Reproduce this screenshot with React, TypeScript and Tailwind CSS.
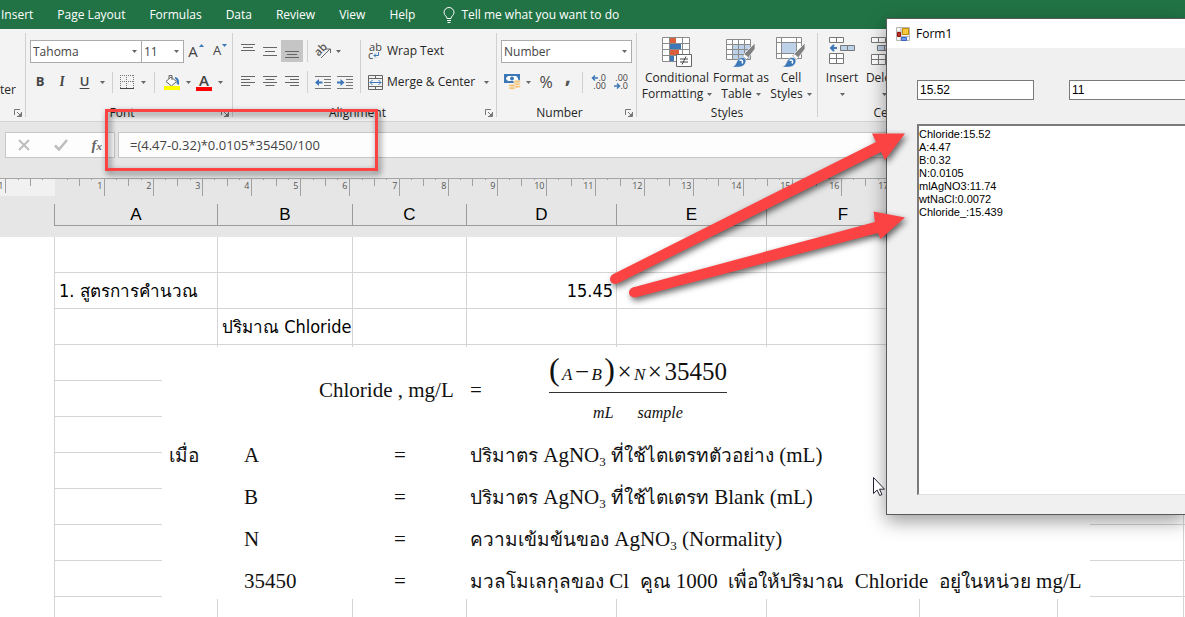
import React from "react";
import clsx from "clsx";

const tabs = ["Insert", "Page Layout", "Formulas", "Data", "Review", "View", "Help"];

const columns = [
	{ id: "A", width: "w-[163px]" },
	{ id: "B", width: "w-[135px]" },
	{ id: "C", width: "w-[114px]" },
	{ id: "D", width: "w-[150px]" },
	{ id: "E", width: "w-[150px]" },
	{ id: "F", width: "w-[153px]" },
	{ id: "G", width: "w-[138px]" },
	{ id: "H", width: "w-[126px]" },
	{ id: "I", width: "" },
];

const cells: { [key: string]: React.ReactNode } = {
	A2: <>1. <span className="text-[17px]">สูตรการคำนวณ</span></>,
	D2: "15.45",
	B3: <><span className="text-[17px]">ปริมาณ</span> Chloride</>,
};

const rows = [1, 2, 3, 4, 5, 6, 7, 8, 9, 10, 11];

const log = ["Chloride:15.52", "A:4.47", "B:0.32", "N:0.0105", "mlAgNO3:11.74", "wtNaCl:0.0072", "Chloride_:15.439"].join("\n");

const Caret = () => (
	<svg viewBox="0 0 5 3" className="w-[5px] h-[3px] shrink-0" fill="#666666" aria-hidden="true">
		<path d="M0 0h5L2.5 3z" />
	</svg>
);

const CaretButton = ({ label, className }: { label: string; className: string }) => (
	<button type="button" aria-label={label} className={clsx("h-[22px] flex items-center justify-center", className)}>
		<Caret />
	</button>
);

const Tool = ({ label, className, children }: { label: string; className: string; children: React.ReactNode }) => (
	<button type="button" aria-label={label} className={clsx("h-[22px] flex items-center justify-center shrink-0", className)}>
		{children}
	</button>
);

const Divider = ({ className }: { className: string }) => <div className={clsx("w-px bg-[#d0d0d0] shrink-0", className)} />;

const Launcher = ({ label }: { label: string }) => (
	<button type="button" aria-label={label} className="w-2 h-2 ml-[3px] mr-[3px] shrink-0">
		<svg viewBox="0 0 8 8" className="w-2 h-2" fill="none" stroke="#777777">
			<path d="M.5 6V.5H6M3 3l3 3M7.5 3v4.5H3" />
			<path d="M7 4v3H4z" fill="#777777" stroke="none" />
		</svg>
	</button>
);

const Group = ({ label, launcher, className, children }: { label: string; launcher?: boolean; className: string; children: React.ReactNode }) => (
	<section aria-label={label || "Clipboard"} className={clsx("flex flex-col shrink-0 h-[84px] border-r border-[#d0d0d0]", className)}>
		{children}
		<div className="mt-auto flex items-center h-2 leading-4">
			<div className="flex-1 text-center">{label}</div>
			{launcher && <Launcher label={`${label} settings`} />}
		</div>
	</section>
);

const Combo = ({ label, value, className }: { label: string; value: string; className: string }) => (
	<div className={clsx("grid items-center border border-[#ababab] bg-white h-[23px]", className)}>
		<select aria-label={label} className="col-start-1 row-start-1 appearance-none w-full bg-transparent pl-[2px] leading-5 text-[#444444] outline-none">
			<option>{value}</option>
		</select>
		<div className="col-start-1 row-start-1 justify-self-end pr-1 pointer-events-none">
			<Caret />
		</div>
	</div>
);

const Lines = ({ d, size = 14 }: { d: string; size?: number }) => (
	<svg viewBox={`0 0 ${size} 14`} width={size} height="14" stroke="#666666" fill="none" aria-hidden="true">
		<path d={d} />
	</svg>
);

const IndentIcon = ({ right }: { right?: boolean }) => (
	<svg viewBox="0 0 16 14" width="16" height="14" fill="none" aria-hidden="true">
		<path d="M0 1.5h16M9 4.5h7M9 7.5h7M9 10.5h7M0 13.5h16" stroke="#777777" />
		{right ? (
			<path d="M0 6.5h3.500V4l4 3.500-4 3.500V8.500H0z" fill="#3c78b8" />
		) : (
			<path d="M7.500 6.500H4V4L0 7.500 4 11V8.500h3.500z" fill="#3c78b8" />
		)}
	</svg>
);

const BordersIcon = () => (
	<svg viewBox="0 0 14 14" width="14" height="14" fill="none" stroke="#777777" aria-hidden="true">
		<path d="M0 .5h14M0 6.500h14M.5 0v13M6.500 0v13M13.500 0v13" strokeDasharray="1 1" />
		<path d="M0 13.500h14" stroke="#444444" />
	</svg>
);

const FillIcon = () => (
	<svg viewBox="0 0 16 16" width="16" height="16" fill="none" aria-hidden="true">
		<path d="M11 3c3 .5 4.500 2.500 4 8l-2.500-1.500c.5-2 .5-3.500-1.500-5z" fill="#3c78b8" />
		<path d="M7 3l5.500 4.500-5 4.500L2 7.500z" fill="#ffffff" stroke="#666666" />
		<path d="M5 5V1.500h3V6" stroke="#666666" />
		<path d="M0 12h16v4H0z" fill="#ffff00" />
	</svg>
);

const OrientationIcon = () => (
	<svg viewBox="0 0 17 16" width="17" height="16" fill="none" className="overflow-visible" aria-hidden="true">
		<text x="0" y="11" transform="rotate(-45 5 8)" fontSize="11" fontWeight="600" fill="#555555">ab</text>
		<path d="M6 15L15 6M11 6h4.500v4" stroke="#666666" />
	</svg>
);

const WrapIcon = () => (
	<span className="flex flex-col w-[15px] text-[11px] leading-2 text-[#444444]" aria-hidden="true">
		<span>ab</span>
		<span className="flex items-center">
			c
			<svg viewBox="0 0 6 6" width="6" height="6" fill="none" stroke="#3c78b8">
				<path d="M5.500 0v3.500H1M3 1.500l-2 2 2 2" />
			</svg>
		</span>
	</span>
);

const MergeIcon = () => (
	<svg viewBox="0 0 15 15" width="15" height="15" fill="none" aria-hidden="true">
		<path d="M.5.5h14v14H.5zM.5 3.500h14M.5 11.500h14M7.500.5v3M7.500 11.500v3" stroke="#666666" />
		<path d="M2 7.500h11M4.500 5L2 7.500 4.500 10M10.500 5L13 7.500 10.500 10" stroke="#3c78b8" />
	</svg>
);

const MoneyIcon = () => (
	<svg viewBox="0 0 17 16" width="17" height="16" fill="none" aria-hidden="true">
		<path d="M0 0h16v9H0z" fill="#3c78b8" />
		<path d="M2 2h12v5H2z" fill="#ffffff" />
		<path d="M2 2h2L2 4zM14 2h-2l2 2zM2 7h2L2 5z" fill="#3c78b8" />
		<circle cx="8" cy="4.500" r="2" fill="#3c78b8" />
		<g fill="#f0c27a" stroke="#ffffff" strokeWidth=".6">
			<ellipse cx="13" cy="12.500" rx="3.500" ry="1.500" />
			<ellipse cx="13" cy="10" rx="3.500" ry="1.500" />
			<ellipse cx="13" cy="7.500" rx="3.500" ry="1.500" />
			<ellipse cx="8" cy="14" rx="3.500" ry="1.500" />
			<ellipse cx="8" cy="11.500" rx="3.500" ry="1.500" />
		</g>
	</svg>
);

const DecimalIcon = ({ increase }: { increase?: boolean }) => (
	<svg viewBox="0 0 16 16" width="16" height="16" fill="none" className="overflow-visible" aria-hidden="true">
		<text x="15" y="7" textAnchor="end" fontSize="9" fill="#444444">{increase ? ".0" : ".00"}</text>
		<text x="15" y="15" textAnchor="end" fontSize="9" fill="#444444">{increase ? ".00" : ".0"}</text>
		{increase ? (
			<path d="M7 4H1.500M4 1.500L1.500 4 4 6.500" stroke="#3c78b8" strokeWidth="1.500" />
		) : (
			<path d="M1 12h5.500M4 9.500L6.500 12 4 14.500" stroke="#3c78b8" strokeWidth="1.500" />
		)}
	</svg>
);

const Brush = () => (
	<g>
		<path d="M29 6v6l-6.500 8.500-4.500-3.500z" fill="#808080" stroke="#f3f3f3" strokeWidth=".8" />
		<path d="M18.500 17l4 3.500-2 2-4-3.500z" fill="#ffffff" stroke="#808080" strokeWidth=".6" />
		<path d="M6 30c5-1 4-8 9-9.500 4.500-.5 6.500 3.500 3.500 7-2.500 3-7.500 3-12.500 2.500z" fill="#3c78b8" stroke="#f3f3f3" strokeWidth=".6" />
		<path d="M13.500 23.500c2.500-1.500 4 .5 2.500 3" stroke="#ffffff" strokeWidth="1.500" />
	</g>
);

const ConditionalIcon = () => (
	<svg viewBox="0 0 30 30" className="w-[30px] h-[30px]" fill="none" aria-hidden="true">
		<path d="M.5.5h27v24H.5z" fill="#ffffff" />
		<path d="M.5.5h27v24H.5zM0 6.500h28M0 12.500h28M0 18.500h28M7.500 0v25M20.500 0v25" stroke="#8a8a8a" />
		<path d="M8 1h6v5H8zM8 13h9v5H8z" fill="#dc5f3c" />
		<path d="M8 7h11v5H8zM8 19h4v5H8z" fill="#3c78b8" />
		<path d="M14.500 17.500h15v12h-15z" fill="#ffffff" stroke="#666666" />
		<path d="M18 22h8M18 25h8M24 19.500l-4 8" stroke="#444444" />
	</svg>
);

const TableIcon = () => (
	<svg viewBox="0 0 30 30" className="w-[30px] h-[30px]" fill="none" aria-hidden="true">
		<path d="M.5 2.500h24v20H.5z" fill="#ffffff" />
		<path d="M7 8h17v14H7z" fill="#bdd1e8" />
		<path d="M.5 2.500h24v20H.5zM0 7.500h25M0 12.500h25M0 17.500h25M6.500 2v21M12.500 2v21M18.500 2v21" stroke="#8a8a8a" />
		<Brush />
	</svg>
);

const CellStyleIcon = () => (
	<svg viewBox="0 0 30 30" className="w-[30px] h-[30px]" fill="none" aria-hidden="true">
		<path d="M.5.5h25v21H.5z" fill="#ffffff" />
		<path d="M.5.5h25v21H.5zM0 5.500h26M0 16.500h26M5.500 0v22M20.500 0v22" stroke="#8a8a8a" />
		<path d="M6 6h14v10H6z" fill="#bdd1e8" />
		<Brush />
	</svg>
);

const InsertIcon = () => (
	<svg viewBox="0 0 30 30" className="w-[30px] h-[30px]" fill="none" stroke="#777777" aria-hidden="true">
		<path d="M2.500.5h14v5h-14zM9.500.5v5M2.500 16.500h14v10h-14zM9.500 16.500v10M2.500 21.500h14" fill="#ffffff" />
		<path d="M13.500 8.500h14v5h-14zM20.500 8.500v5" fill="#bdd1e8" />
		<path d="M10 11H4M7 8l-3 3 3 3" stroke="#3c78b8" strokeWidth="2" />
	</svg>
);

const DeleteIcon = () => (
	<svg viewBox="0 0 30 30" className="w-[30px] h-[30px]" fill="none" stroke="#777777" aria-hidden="true">
		<path d="M2.500.5h14v5h-14zM9.500.5v5M2.500 17.500h14v10h-14zM9.500 17.500v10M2.500 22.500h14" fill="#ffffff" />
		<path d="M8.500 8.500h14v5h-14zM15.500 8.500v5" fill="#bdd1e8" />
		<path d="M17 5l8 8M25 5l-8 8" stroke="#dc5f3c" strokeWidth="2" />
	</svg>
);

const BigButton = ({ icon, first, second, className }: { icon: React.ReactNode; first: string; second?: string; className: string }) => (
	<button type="button" className={clsx("flex flex-col items-center shrink-0 pt-1 whitespace-nowrap leading-4", className)}>
		{icon}
		<span className="mt-[3px]">{first}</span>
		<span className="flex items-center gap-1 h-4">
			{second}
			<Caret />
		</span>
	</button>
);

const Ribbon = () => (
	<div className="flex py-1 shrink-0 bg-[#f3f3f3] border-b border-[#d2d2d2] text-[#262626] overflow-hidden">
		<Group label="" launcher className="w-[26px]">
			<div className="pt-[49px] leading-4">ter</div>
		</Group>

		<Group label="Font" launcher className="w-[207px]">
			<div className="flex pl-1 pt-[7px]">
				<Combo label="Font name" value="Tahoma" className="w-[112px]" />
				<Combo label="Font size" value="11" className="w-[43px] -ml-px" />
				<Tool label="Increase font size" className="w-6 gap-px text-[15px] text-[#444444]">
					A
					<svg viewBox="0 0 5 3" className="w-[5px] h-[3px] mb-3" fill="#3c78b8"><path d="M0 3h5L2.500 0z" /></svg>
				</Tool>
				<Tool label="Decrease font size" className="w-6 gap-px text-[13px] text-[#444444]">
					A
					<svg viewBox="0 0 5 3" className="w-[5px] h-[3px] mb-3" fill="#3c78b8"><path d="M0 0h5L2.500 3z" /></svg>
				</Tool>
			</div>
			<div className="flex items-center pl-[3px] pt-2 text-[13px] text-[#444444]">
				<Tool label="Bold" className="w-[22px] font-bold">B</Tool>
				<Tool label="Italic" className="w-[22px] font-serif italic font-bold">I</Tool>
				<Tool label="Underline" className="w-[23px] font-semibold underline underline-offset-2">U</Tool>
				<CaretButton label="Underline options" className="w-3" />
				<Divider className="h-[21px] mx-1" />
				<Tool label="Borders" className="w-5"><BordersIcon /></Tool>
				<CaretButton label="Border options" className="w-3" />
				<Divider className="h-[21px] mx-[5px]" />
				<Tool label="Fill color" className="w-6"><FillIcon /></Tool>
				<CaretButton label="Fill color options" className="w-2" />
				<Tool label="Font color" className="w-6 flex-col">
					<span className="leading-3 text-[15px] font-semibold">A</span>
					<span className="w-4 h-1 mt-px bg-[#ff0000]" />
				</Tool>
				<CaretButton label="Font color options" className="w-2" />
			</div>
		</Group>

		<Group label="Alignment" launcher className="w-[264px]">
			<div className="flex pt-[7px]">
				<div className="w-[127px] pl-1 shrink-0">
					<div className="flex">
						<Tool label="Top align" className="w-[22px]"><Lines d="M0 .5h14M2 3.500h10M0 6.500h14" /></Tool>
						<Tool label="Middle align" className="w-[22px]"><Lines d="M0 3.500h14M2 7.500h10M0 11.500h14" /></Tool>
						<Tool label="Bottom align" className="w-[22px] bg-[#c5c5c5]"><Lines d="M0 7.500h14M2 10.500h10M0 13.500h14" /></Tool>
						<Divider className="h-[22px] mx-1" />
						<Tool label="Orientation" className="w-[22px]"><OrientationIcon /></Tool>
						<CaretButton label="Orientation options" className="w-2" />
					</div>
					<div className="flex pt-[9px]">
						<Tool label="Align left" className="w-[22px]"><Lines d="M0 1.500h14M0 4.500h9M0 7.500h14M0 10.500h9" /></Tool>
						<Tool label="Center" className="w-[22px]"><Lines d="M0 1.500h14M2.500 4.500h9M0 7.500h14M2.500 10.500h9" /></Tool>
						<Tool label="Align right" className="w-[22px]"><Lines d="M0 1.500h14M5 4.500h9M0 7.500h14M5 10.500h9" /></Tool>
						<Divider className="h-[22px] mx-1" />
						<Tool label="Decrease indent" className="w-[22px]"><IndentIcon /></Tool>
						<Tool label="Increase indent" className="w-[22px]"><IndentIcon right /></Tool>
					</div>
				</div>
				<Divider className="h-[53px]" />
				<div className="pl-[7px] flex-1">
					<button type="button" className="flex items-center gap-1 h-[22px] whitespace-nowrap">
						<WrapIcon />
						Wrap Text
					</button>
					<div className="flex justify-between pt-[9px]">
						<button type="button" className="flex items-center gap-1 h-[22px] whitespace-nowrap">
							<MergeIcon />
							Merge &amp; Center
						</button>
						<CaretButton label="Merge options" className="w-[22px]" />
					</div>
				</div>
			</div>
		</Group>

		<Group label="Number" launcher className="w-[140px]">
			<div className="flex pl-1 pt-[7px]">
				<Combo label="Number format" value="Number" className="w-[131px]" />
			</div>
			<div className="flex items-center pl-1 pt-2">
				<Tool label="Accounting format" className="w-[22px]"><MoneyIcon /></Tool>
				<CaretButton label="Accounting options" className="w-2.5" />
				<Tool label="Percent style" className="w-[26px] text-[16px] text-[#444444]">%</Tool>
				<Tool label="Comma style" className="w-[18px] pb-4 text-[22px] font-bold text-[#555555]">,</Tool>
				<Divider className="h-[21px] mx-[5px]" />
				<Tool label="Increase decimal" className="w-[22px]"><DecimalIcon increase /></Tool>
				<Tool label="Decrease decimal" className="w-[22px]"><DecimalIcon /></Tool>
			</div>
		</Group>

		<Group label="Styles" className="w-[181px]">
			<div className="flex pl-1">
				<BigButton icon={<ConditionalIcon />} first="Conditional" second="Formatting" className="w-[72px]" />
				<BigButton icon={<TableIcon />} first="Format as" second="Table" className="w-14" />
				<BigButton icon={<CellStyleIcon />} first="Cell" second="Styles" className="w-11" />
			</div>
		</Group>

		<Group label="Cells" className="w-[138px]">
			<div className="flex pl-1.5">
				<BigButton icon={<InsertIcon />} first="Insert" className="w-9" />
				<BigButton icon={<DeleteIcon />} first="Delete" className="w-12" />
			</div>
		</Group>
	</div>
);

const FormulaBar = () => (
	<div className="flex gap-[3px] pl-[5px] pt-2.5 pb-5">
		<div className="flex items-center justify-around w-[110px] h-[26px] bg-[#fdfdfd] border border-[#c6c6c6]">
			<button type="button" aria-label="Cancel">
				<svg viewBox="0 0 12 12" className="w-3 h-3" stroke="#bdbdbd" strokeWidth="2"><path d="M1 1l10 10M11 1L1 11" /></svg>
			</button>
			<button type="button" aria-label="Enter">
				<svg viewBox="0 0 14 12" className="w-3.5 h-3" fill="none" stroke="#bdbdbd" strokeWidth="2.500"><path d="M1 6.500L5 10.500 13 1" /></svg>
			</button>
			<button type="button" aria-label="Insert function" className="font-['Liberation_Serif',serif] italic font-bold text-[15px] leading-5 text-[#666666]">
				f<span className="text-[11px]">x</span>
			</button>
		</div>
		<input
			aria-label="Formula"
			defaultValue="=(4.47-0.32)*0.0105*35450/100"
			className="flex-1 min-w-0 h-[26px] pl-[11px] bg-[#fdfdfd] border border-r-0 border-[#c6c6c6] text-[13px] text-[#444444] outline-none"
		/>
	</div>
);

const UNIT = 49.15;
const ORIGIN = 55;
const marks = Array.from({ length: 25 }, (_, i) => i - 1);

const Ruler = () => (
	<div className="h-[18px] border-t border-[#a6a6a6] overflow-hidden">
		<svg width="100%" height="17" stroke="#a0a0a0" aria-hidden="true">
			<rect width={ORIGIN} height="17" fill="#f1f1f1" stroke="none" />
			{marks.map((n) => {
				const at = (part: number) => Math.floor(ORIGIN + UNIT * (n + part)) + 0.5;
				return (
					<g key={n}>
						{n !== 0 && <path d={`M${at(0)} 0v${n < 0 ? 14 : 17}`} />}
						<path d={`M${at(0.25)} 0v1M${at(0.5)} 0v7M${at(0.75)} 0v1`} />
						{n !== 0 && (
							<text x={at(0) - 2} y="10" textAnchor="end" fontSize="9" fill="#555555" stroke="none">
								{Math.abs(n)}
							</text>
						)}
					</g>
				);
			})}
		</svg>
	</div>
);

const Sheet = () => (
	<table className="w-full table-fixed border-separate border-spacing-0 font-['DejaVu_Sans_Condensed','Noto_Sans',sans-serif] text-black">
		<colgroup>
			<col className="w-[54px]" />
			{columns.map((column) => (
				<col key={column.id} className={column.width} />
			))}
		</colgroup>
		<thead className="bg-[#e6e6e6] font-['Liberation_Sans',sans-serif]">
			<tr>
				<td className="h-2" colSpan={10} />
			</tr>
			<tr>
				<td />
				{columns.map((column) => (
					<th key={column.id} scope="col" className="h-[22px] p-0 border-l border-b border-[#9b9b9b] text-[17px] leading-5 font-normal">
						{column.id}
					</th>
				))}
			</tr>
			<tr>
				<td className="h-[11px]" colSpan={10} />
			</tr>
		</thead>
		<tbody>
			{rows.map((row) => (
				<tr key={row}>
					<td className="h-9" />
					{columns.map((column) => (
						<td
							key={column.id}
							className={clsx("h-9 py-0 pl-1 pr-[3px] border-l border-b border-[#d4d4d4] text-[18px] leading-6 whitespace-nowrap", column.id === "D" && "text-right")}
						>
							{cells[column.id + row]}
						</td>
					))}
				</tr>
			))}
		</tbody>
	</table>
);

const AgNO3 = () => (
	<>
		AgNO<sub className="text-[13px] leading-none">3</sub>
	</>
);

const Thai = ({ children }: { children: string }) => <span className="text-[19px]">{children}</span>;

const terms = [
	{ when: "เมื่อ", symbol: "A", text: <><Thai>ปริมาตร</Thai> <AgNO3 /> <Thai>ที่ใช้ไตเตรทตัวอย่าง</Thai> (mL)</> },
	{ when: "", symbol: "B", text: <><Thai>ปริมาตร</Thai> <AgNO3 /> <Thai>ที่ใช้ไตเตรท</Thai> Blank (mL)</> },
	{ when: "", symbol: "N", text: <><Thai>ความเข้มข้นของ</Thai> <AgNO3 /> (Normality)</> },
	{
		when: "",
		symbol: "35450",
		text: (
			<>
				<Thai>มวลโมเลกุลของ</Thai> Cl &nbsp;<Thai>คูณ</Thai> 1000 &nbsp;<Thai>เพื่อให้ปริมาณ</Thai> &nbsp;Chloride &nbsp;<Thai>อยู่ในหน่วย</Thai> mg/L
			</>
		),
	},
];

// Floats over the cells, anchored under row 3
const FormulaNote = () => (
	<div className="absolute left-[162px] top-[151px] w-[928px] h-[252px] bg-white pl-[7px] font-['Liberation_Serif',serif] text-[21px] text-[#111111] whitespace-nowrap">
		<div className="flex items-center h-[88px]">
			<div className="w-[150px]" />
			<div className="w-[151px]">Chloride , mg/L</div>
			<div className="w-[79px]">=</div>
			<div className="w-[178px]">
				<div className="flex items-baseline justify-between h-[46px] pt-1 leading-9 border-b border-[#333333]">
					<span className="text-[32px]">(</span>
					<i className="text-[17px]">A</i>
					<span className="text-[25px]">−</span>
					<i className="text-[17px]">B</i>
					<span className="text-[32px]">)</span>
					<span className="text-[25px]">×</span>
					<i className="text-[17px]">N</i>
					<span className="text-[25px]">×</span>
					<span className="text-[25px]">35450</span>
				</div>
				<div className="flex justify-center gap-6 h-[42px] pt-2 text-[16px] leading-6">
					<i>mL</i>
					<i>sample</i>
				</div>
			</div>
		</div>
		{terms.map((term) => (
			<div key={term.symbol} className="flex items-center h-[42px]">
				<div className="w-[75px] shrink-0"><Thai>{term.when}</Thai></div>
				<div className="w-[150px] shrink-0">{term.symbol}</div>
				<div className="w-[76px] shrink-0">=</div>
				<div>{term.text}</div>
			</div>
		))}
	</div>
);

const FormIcon = () => (
	<svg viewBox="0 0 14 14" className="w-3.5 h-3.5" aria-hidden="true">
		<path d="M.5.5h13v13H.5zM.5 5h5M5 .5v13M5 9.500h9" fill="#f4f4f4" stroke="#b5b5b5" />
		<path d="M6.500 1.500h6v6h-6z" fill="#f8c83c" stroke="#c58a00" />
		<path d="M1.500 5.500h3v4h-3z" fill="#c03020" stroke="#8c1408" />
		<path d="M5.500 10.500h5v3h-5z" fill="#6c9cf0" stroke="#3c64c8" />
	</svg>
);

const FormWindow = () => (
	<section
		aria-label="Form1"
		className="absolute left-[886px] right-0 top-[18px] h-[497px] flex flex-col border border-r-0 border-[#5a5a5a] bg-[#f0f0f0] text-black shadow-[0_6px_18px_rgba(0,0,0,0.4)]"
	>
		<div className="flex items-center gap-1.5 h-[29px] pl-[9px] bg-white">
			<FormIcon />
			Form1
		</div>
		<div className="flex flex-col flex-1 pl-[30px] pt-8 font-['Liberation_Sans',sans-serif]">
			<div className="flex items-start gap-[35px]">
				<input aria-label="Result" defaultValue="15.52" className="w-[117px] h-5 pl-[2px] shrink-0 bg-white border border-[#7a7a7a] text-[12px] outline-none" />
				<input aria-label="Sample" defaultValue="11" className="flex-1 min-w-0 h-5 pl-[2px] bg-white border border-r-0 border-[#7a7a7a] text-[12px] outline-none" />
			</div>
			<textarea
				aria-label="Output"
				readOnly
				value={log}
				className="mt-6 h-[371px] resize-none pl-0 pt-[2px] bg-white border-l-2 border-t-2 border-[#7a7a7a] border-b border-b-[#e0e0e0] text-[11px] leading-[13px] outline-none"
			/>
		</div>
	</section>
);

// Red marker box, arrows and the pointer drawn over everything else
const Annotations = () => (
	<>
		<div className="absolute left-[105px] top-[109px] w-[273px] h-[62px] border-[3px] border-[#fc4343] drop-shadow-[2px_3px_3px_rgba(0,0,0,0.6)] pointer-events-none" />
		<svg viewBox="0 0 300 180" className="absolute left-[608px] top-[128px] w-[300px] h-[180px] overflow-visible drop-shadow-[2px_3px_3px_rgba(0,0,0,0.6)] pointer-events-none" fill="#fc4343" aria-hidden="true">
			<circle cx="7" cy="151" r="5" />
			<path d="M4.500 146.500L268 14 264 5.500 297 5.500 277 32 273 24 9.500 155.500z" />
			<circle cx="26" cy="164.500" r="5" />
			<path d="M24.700 159.600L267 94 265.500 83.500 297 89.500 272.500 111 270 105 27.300 169.400z" />
		</svg>
		<svg viewBox="0 0 12 19" className="absolute left-[873px] top-[477px] w-3 h-[19px] pointer-events-none" fill="#ffffff" stroke="#222233" aria-hidden="true">
			<path d="M.5.5v16l3.700-3.500 2.500 5.500 2.300-1-2.500-5.300h5z" />
		</svg>
	</>
);

export default function App() {
	return (
		<main className="relative h-screen overflow-hidden flex flex-col bg-white font-['Open_Sans','Noto_Sans',sans-serif] text-[12px]">
			<nav className="flex items-center gap-6 h-[29px] pl-px shrink-0 bg-[#217346] text-white whitespace-nowrap">
				{tabs.map((tab) => (
					<button key={tab} type="button">
						{tab}
					</button>
				))}
				<button type="button" className="flex items-center gap-1.5 pl-1">
					<svg viewBox="0 0 12 16" className="w-3 h-4" fill="none" stroke="#ffffff" aria-hidden="true">
						<path d="M4 11.500C4 9 1 8.500 1 5.500a5 5 0 0110 0c0 3-3 3.500-3 6zM4 13.500h4M4.500 15.500h3" />
					</svg>
					Tell me what you want to do
				</button>
			</nav>
			<Ribbon />
			<div className="shrink-0 bg-[#e6e6e6]">
				<FormulaBar />
				<Ruler />
			</div>
			<div className="relative">
				<Sheet />
				<FormulaNote />
			</div>
			<FormWindow />
			<Annotations />
		</main>
	);
}
